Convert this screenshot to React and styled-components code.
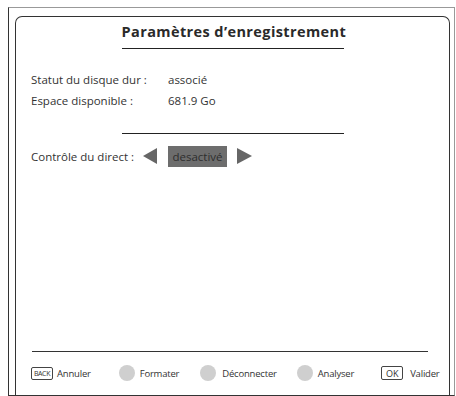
import * as React from 'react';
import styled, { createGlobalStyle } from 'styled-components';

const GlobalStyle = createGlobalStyle`
  html, body {
    margin: 0;
    padding: 0;
    background: #fff;
  }
  body {
    font-family: "Open Sans", "Liberation Sans", sans-serif;
    color: #333;
  }
`;

const Frame = styled.div`
  box-sizing: border-box;
  display: flex;
  flex-direction: column;
  width: 447px;
  height: 389px;
  margin: 7px 0 0 8px;
  border-top: 1px solid #999;
  border-right: 1px solid #999;
  border-left: 1px solid #333;
  border-bottom: 1px solid #333;
`;

const Panel = styled.div`
  flex: 1;
  display: flex;
  flex-direction: column;
  margin: 8px 4px 0 6px;
  border: 1px solid #333;
  border-bottom: none;
  border-radius: 7px 7px 0 0;
`;

const TitleWrap = styled.div`
  display: flex;
  justify-content: center;
  margin-top: 6px;
`;

const Title = styled.h1`
  margin: 0;
  padding-bottom: 7px;
  width: 222px;
  text-align: center;
  border-bottom: 1px solid #222;
  font-size: 14.5px;
  line-height: 18px;
  font-weight: 700;
  letter-spacing: 0.4px;
  color: #2a2a2a;
  white-space: nowrap;
`;

const Info = styled.div`
  display: flex;
  flex-direction: column;
  margin: 20px 0 0 15px;
`;

const Row = styled.div`
  display: grid;
  grid-template-columns: 137px auto;
  align-items: center;
  height: 21px;
  font-size: 11.5px;
`;

const Divider = styled.div`
  align-self: center;
  width: 222px;
  height: 1px;
  margin-top: 22px;
  background: #222;
`;

const Control = styled.div`
  display: flex;
  align-items: center;
  height: 22px;
  margin: 11px 0 0 15px;
  font-size: 11.5px;
`;

const ControlLabel = styled.span`
  width: 112px;
`;

const Arrow = styled.span`
  width: 0;
  height: 0;
  border-top: 8px solid transparent;
  border-bottom: 8px solid transparent;
  ${p => (p.$dir === 'left'
    ? 'border-right: 14px solid #666;'
    : 'border-left: 15px solid #666;')}
`;

const Value = styled.span`
  display: flex;
  align-items: center;
  justify-content: center;
  width: 59px;
  height: 21px;
  margin: 0 10px 0 11px;
  background: #6d6d6d;
  color: #2e2e2e;
`;

const Spacer = styled.div`
  flex: 1;
`;

const FooterLine = styled.div`
  height: 1px;
  margin: 0 21px 0 16px;
  background: #333;
`;

const Footer = styled.div`
  display: flex;
  align-items: center;
  height: 42px;
  margin-bottom: 1px;
  padding: 0 0 0 15px;
  font-size: 9.5px;
  letter-spacing: -0.2px;
`;

const Action = styled.div`
  display: flex;
  align-items: center;
  gap: ${p => p.$gap || 4}px;
  margin-left: ${p => p.$offset || 0}px;
`;

const Key = styled.span`
  box-sizing: border-box;
  display: flex;
  align-items: center;
  justify-content: center;
  width: 22px;
  height: ${p => p.$tall ? 14 : 13}px;
  border: 1px solid #444;
  border-radius: 2px;
  font-size: ${p => p.$small ? 7 : 9}px;
  letter-spacing: ${p => p.$small ? -0.4 : 0}px;
  color: #333;
`;

const Dot = styled.span`
  width: 16px;
  height: 16px;
  border-radius: 50%;
  background: #cfcfcf;
`;

export default function App() {
  return (
    <>
      <GlobalStyle />
      <Frame>
        <Panel>
          <TitleWrap>
            <Title>Paramètres d’enregistrement</Title>
          </TitleWrap>
          <Info>
            <Row><span>Statut du disque dur :</span><span>associé</span></Row>
            <Row><span>Espace disponible :</span><span>681.9 Go</span></Row>
          </Info>
          <Divider />
          <Control>
            <ControlLabel>Contrôle du direct :</ControlLabel>
            <Arrow $dir="left" />
            <Value>desactivé</Value>
            <Arrow $dir="right" />
          </Control>
          <Spacer />
          <FooterLine />
          <Footer>
            <Action><Key $small>BACK</Key>Annuler</Action>
            <Action $offset={28} $gap={5}><Dot />Formater</Action>
            <Action $offset={21} $gap={6}><Dot />Déconnecter</Action>
            <Action $offset={20} $gap={5}><Dot />Analyser</Action>
            <Action $offset={27} $gap={7}><Key $tall>OK</Key>Valider</Action>
          </Footer>
        </Panel>
      </Frame>
    </>
  );
}
